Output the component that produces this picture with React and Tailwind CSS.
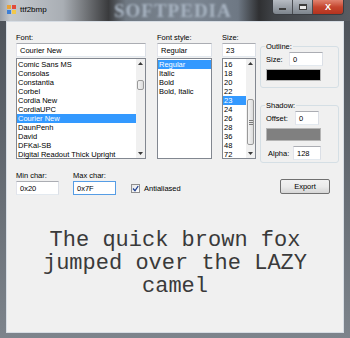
import { useState } from "react";

const fonts = [
  "Comic Sans MS",
  "Consolas",
  "Constantia",
  "Corbel",
  "Cordia New",
  "CordiaUPC",
  "Courier New",
  "DaunPenh",
  "David",
  "DFKai-SB",
  "Digital Readout Thick Upright",
];
const styles = ["Regular", "Italic", "Bold", "Bold, Italic"];
const sizes = ["16", "18", "20", "22", "23", "24", "26", "28", "36", "48", "72"];

function TextBox({ value, className = "", focused = false }) {
  return (
    <div
      className={`flex h-[14px] items-center border bg-white pl-[3px] text-[7.5px] text-black ${
        focused ? "border-[#569de5]" : "border-[#abadb3] border-b-[#e3e9ef] border-l-[#e2e3ea] border-r-[#dbdfe6]"
      } ${className}`}
    >
      {value}
    </div>
  );
}

function ScrollBar({ thumbTop, thumbHeight, grip }) {
  return (
    <div className="flex w-[9px] flex-col bg-[#f0f0f0]">
      <div className="flex h-[9px] items-center justify-center">
        <svg width="5" height="3" viewBox="0 0 5 3">
          <path d="M0 3 L2.5 0 L5 3 Z" fill="#3a3a3a" />
        </svg>
      </div>
      <div className="flex-1">
        <div
          className="mx-[1px] flex flex-col items-center justify-center gap-[1px] rounded-[2px] border border-[#9a9a9a] bg-gradient-to-r from-[#f4f4f4] to-[#dcdcdc]"
          style={{ marginTop: thumbTop, height: thumbHeight }}
        >
          {grip && (
            <>
              <div className="h-px w-[4px] bg-[#7a7a7a]" />
              <div className="h-px w-[4px] bg-[#7a7a7a]" />
              <div className="h-px w-[4px] bg-[#7a7a7a]" />
            </>
          )}
        </div>
      </div>
      <div className="flex h-[9px] items-center justify-center">
        <svg width="5" height="3" viewBox="0 0 5 3">
          <path d="M0 0 L2.5 3 L5 0 Z" fill="#3a3a3a" />
        </svg>
      </div>
    </div>
  );
}

function ListBox({ items, selected, scroll, className = "" }) {
  return (
    <div className={`flex h-[101px] border border-[#828790] bg-white ${className}`}>
      <div className="flex-1 pt-[1px]">
        {items.map((it) => (
          <div
            key={it}
            className={`h-[9px] whitespace-nowrap pl-[1px] text-[7.5px] leading-[9px] ${
              it === selected ? "bg-[#3399ff] text-white" : "text-black"
            }`}
          >
            {it}
          </div>
        ))}
      </div>
      {scroll}
    </div>
  );
}

function Group({ title, className = "", children }) {
  return (
    <div className={`flex flex-col rounded-[3px] border border-[#d5dfe5] ${className}`}>
      <div className="-mt-[5px] ml-[4px] self-start bg-[#f0f0f0] px-[1px] text-[7.5px] leading-[9px] text-black">
        {title}
      </div>
      {children}
    </div>
  );
}

export default function App() {
  const [anti, setAnti] = useState(true);

  return (
    <div
      className="flex h-[338px] w-[350px] flex-col bg-gradient-to-b from-[#4b5057] to-[#7d848c]"
      style={{ fontFamily: '"Liberation Sans", Arial, sans-serif' }}
    >
      {/* title bar */}
      <div className="relative flex h-[21px] items-start bg-[linear-gradient(to_right,#9ca1a7_0%,#c4c8cd_3%,#a9aeb4_18%,#3a3b3d_31%,#6f7882_36%,#7b8591_55%,#6e7884_68%,#2f3032_74%,#3f4246_78%,#585c62_100%)]">
        <div
          className="absolute left-[114px] top-[2px] text-[19px] font-bold leading-[18px] tracking-[1px] text-[#a8b4c2] blur-[1px]"
          style={{ fontFamily: '"Liberation Serif", serif' }}
        >
          SOFTPEDIA
        </div>
        <div className="relative ml-[7px] mt-[5px] grid h-[9px] w-[9px] grid-cols-2 gap-[1px]">
          <div className="bg-[#e8a33a]" />
          <div className="bg-[#e24a3b]" />
          <div className="bg-[#3c7fd6]" />
          <div className="bg-[#f2c84b]" />
        </div>
        <div className="relative ml-[4px] mt-[4px] text-[8px] leading-[11px] text-black">ttf2bmp</div>
        <div className="relative ml-auto mr-[6px] flex h-[15px] overflow-hidden rounded-b-[4px] border border-t-0 border-[#3a3d42]">
          <div className="flex w-[20px] items-center justify-center border-r border-[#4a4d52] bg-gradient-to-b from-[#b7bcc3] to-[#7e858d]">
            <div className="mt-[4px] h-[2px] w-[7px] border border-[#3c3c3c] bg-white" />
          </div>
          <div className="flex w-[20px] items-center justify-center border-r border-[#4a4d52] bg-gradient-to-b from-[#b7bcc3] to-[#7e858d]">
            <div className="h-[6px] w-[8px] border border-[#3c3c3c] border-t-2 bg-[#e8e8e8]" />
          </div>
          <div className="flex w-[30px] items-center justify-center bg-gradient-to-b from-[#e0826f] via-[#c5452e] to-[#b3331f] text-[9px] font-bold leading-none text-white">
            X
          </div>
        </div>
      </div>

      {/* body with frame */}
      <div className="flex flex-1 px-[6px] pb-[5px]">
        <div className="flex flex-1 flex-col border border-[#d7dde4] bg-[#f0f0f0] text-[7.5px] leading-[9px] text-black">
          {/* top section */}
          <div className="flex pl-[9px] pt-[11px]">
            <div className="flex w-[130px] flex-col">
              <div className="h-[9px]">Font:</div>
              <TextBox value="Courier New" className="mt-[1px]" />
              <ListBox
                items={fonts}
                selected="Courier New"
                className="mt-[1px]"
                scroll={<ScrollBar thumbTop={12} thumbHeight={10} />}
              />
            </div>
            <div className="ml-[11px] flex w-[55px] flex-col">
              <div className="h-[9px]">Font style:</div>
              <TextBox value="Regular" className="mt-[1px]" />
              <ListBox items={styles} selected="Regular" className="mt-[1px]" />
            </div>
            <div className="ml-[10px] flex w-[34px] flex-col">
              <div className="h-[9px]">Size:</div>
              <TextBox value="23" className="mt-[1px]" />
              <ListBox
                items={sizes}
                selected="23"
                className="mt-[1px]"
                scroll={<ScrollBar thumbTop={31} thumbHeight={46} grip />}
              />
            </div>
            <div className="ml-[4px] flex w-[79px] flex-col">
              <Group title="Outline:" className="mt-[13px] h-[42px]">
                <div className="ml-[5px] mt-[1px] flex items-center">
                  <span className="w-[23px]">Size:</span>
                  <TextBox value="0" className="w-[34px]" />
                </div>
                <div className="ml-[5px] mt-[3px] h-[12px] w-[55px] border border-[#b5b5b5] bg-black" />
              </Group>
              <Group title="Shadow:" className="mt-[17px] h-[58px]">
                <div className="ml-[5px] mt-[1px] flex items-center">
                  <span className="w-[29px]">Offset:</span>
                  <TextBox value="0" className="w-[24px]" />
                </div>
                <div className="ml-[5px] mt-[3px] h-[13px] w-[55px] border border-[#b5b5b5] bg-[#808080]" />
                <div className="ml-[7px] mt-[5px] flex items-center">
                  <span className="w-[25px]">Alpha:</span>
                  <TextBox value="128" className="w-[28px]" />
                </div>
              </Group>
            </div>
          </div>

          {/* bottom controls */}
          <div className="mt-[8px] flex items-end pl-[9px]">
            <div className="flex w-[43px] flex-col">
              <div className="h-[9px]">Min char:</div>
              <TextBox value="0x20" className="mt-[1px] h-[13px]" />
            </div>
            <div className="ml-[14px] flex w-[43px] flex-col">
              <div className="h-[9px]">Max char:</div>
              <TextBox value="0x7F" className="mt-[1px]" focused />
            </div>
            <button
              onClick={() => setAnti(!anti)}
              className="ml-[15px] mb-[2px] flex items-center"
            >
              <span className="flex h-[9px] w-[9px] items-center justify-center border border-[#8f8f8f] bg-gradient-to-br from-[#e6e6e6] to-white">
                {anti && (
                  <svg width="7" height="7" viewBox="0 0 7 7">
                    <path d="M1 3.5 L3 5.8 L6.2 1" fill="none" stroke="#1e3f8f" strokeWidth="1.3" />
                  </svg>
                )}
              </span>
              <span className="ml-[4px] text-[7.5px]">Antialiased</span>
            </button>
            <button className="mb-[1px] ml-auto mr-[13px] flex h-[15px] w-[50px] items-center justify-center rounded-[2px] border border-[#707070] bg-gradient-to-b from-[#f2f2f2] via-[#ebebeb] to-[#d6d6d6] text-[7.5px] text-black">
              Export
            </button>
          </div>

          {/* preview */}
          <div
            className="mt-[34px] text-center text-[22px] leading-[23px] text-[#3a3a3a]"
            style={{ fontFamily: '"Liberation Mono", "Courier New", monospace' }}
          >
            The quick brown fox
            <br />
            jumped over the LAZY
            <br />
            camel
          </div>
        </div>
      </div>
    </div>
  );
}
